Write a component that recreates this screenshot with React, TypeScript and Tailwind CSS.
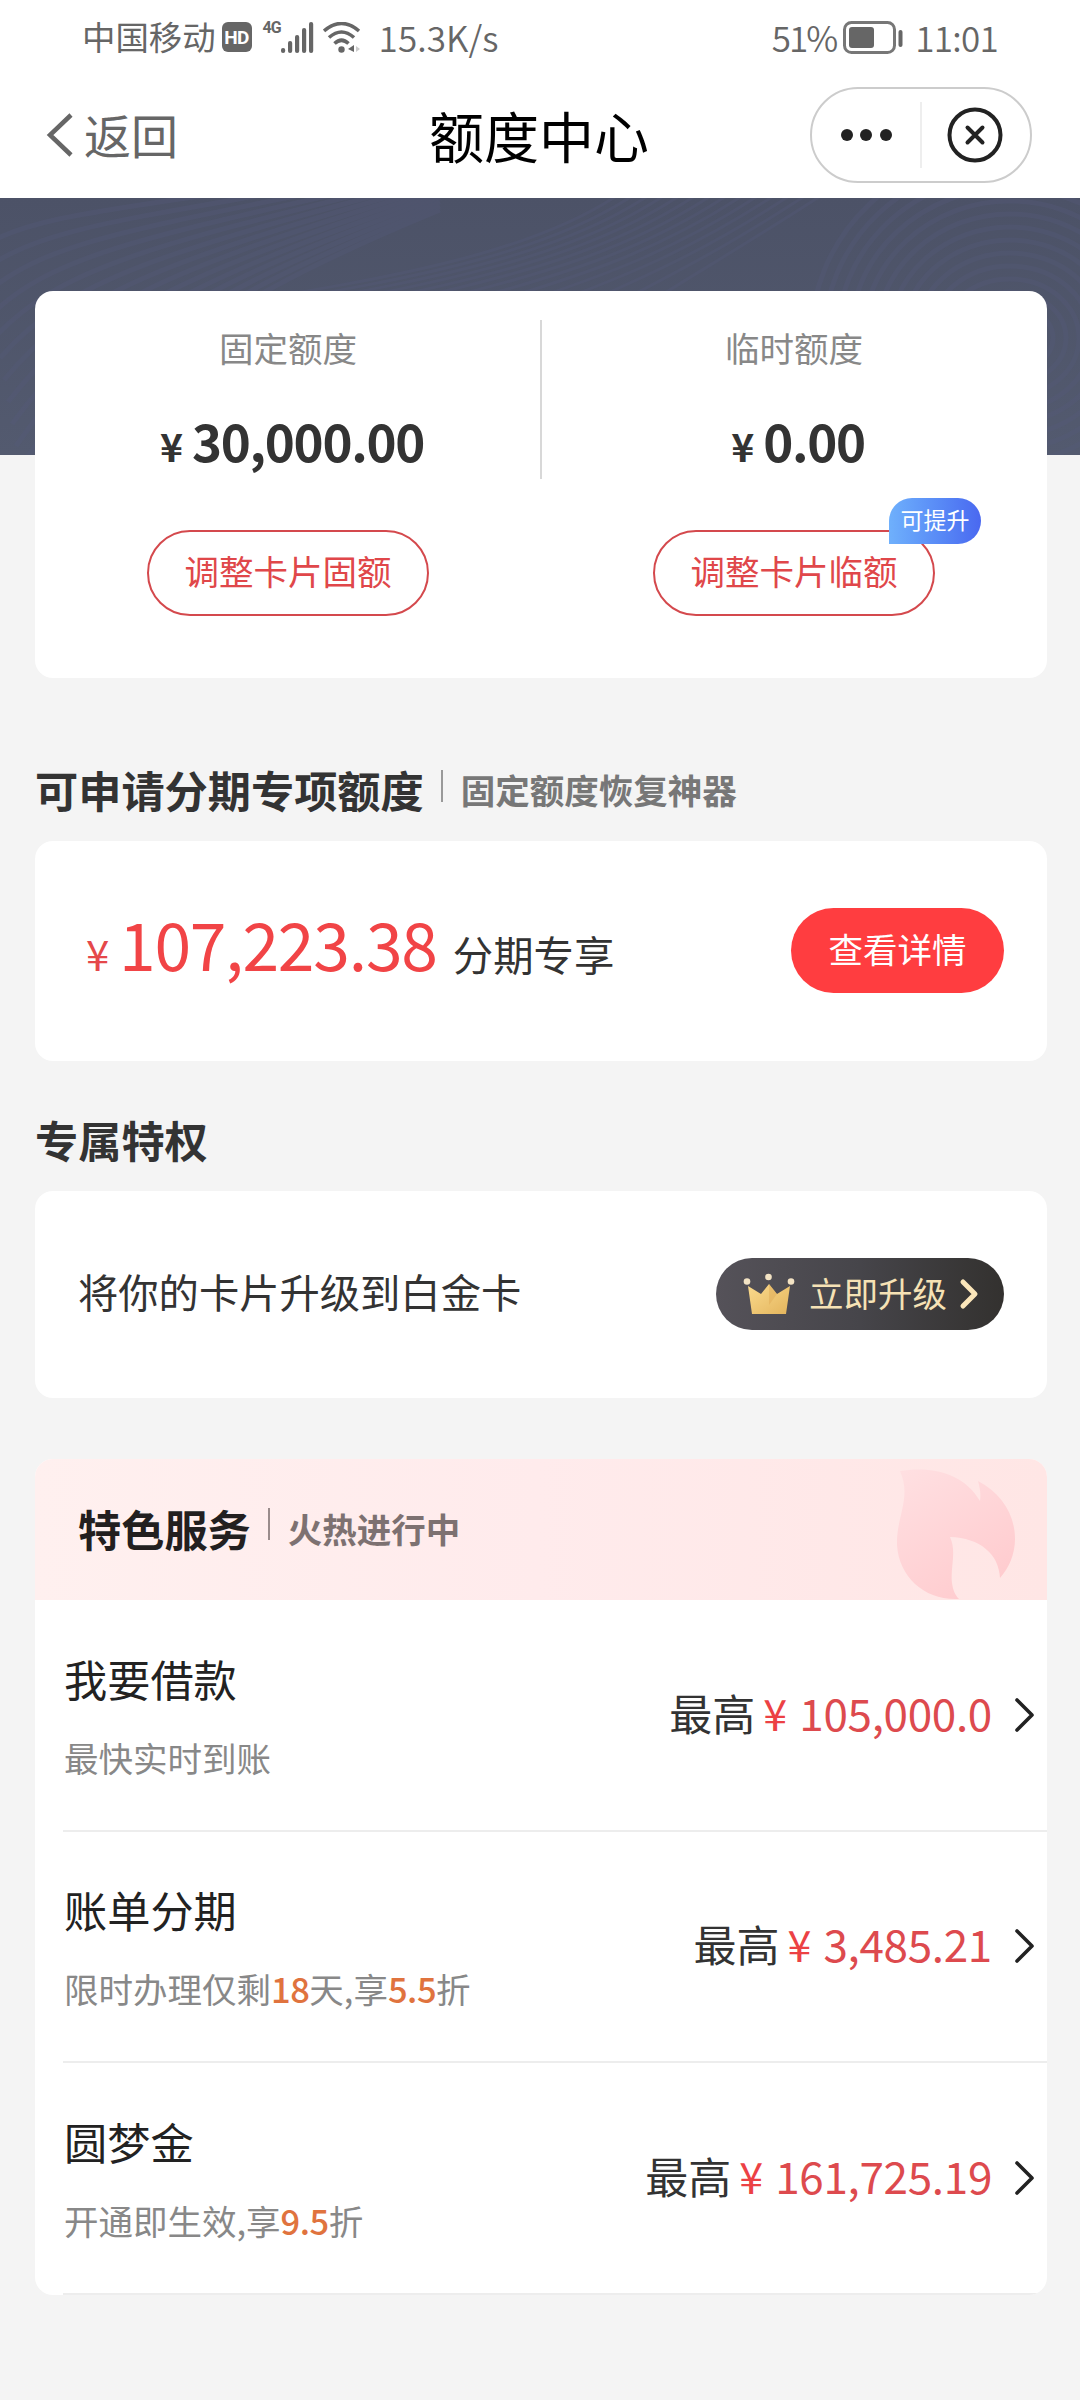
import type { ReactNode } from 'react';

type Service = {
  title: string;
  desc: ReactNode;
  amount: string;
};

const services: Service[] = [
  { title: '我要借款', desc: '最快实时到账', amount: '105,000.0' },
  {
    title: '账单分期',
    desc: (
      <>
        限时办理仅剩<Hot>18</Hot>天,享<Hot>5.5</Hot>折
      </>
    ),
    amount: '3,485.21',
  },
  {
    title: '圆梦金',
    desc: (
      <>
        开通即生效,享<Hot>9.5</Hot>折
      </>
    ),
    amount: '161,725.19',
  },
];

export default function App() {
  return (
    <div className="w-[1080px] h-[2400px] overflow-hidden bg-[#f4f4f4] text-[#333] font-['Noto_Sans_CJK_SC',sans-serif]">
      <StatusBar />
      <NavBar />
      <HeaderPattern />

      <main className="relative pl-[35px] pr-[33px] -mt-[164px]">
        <section className="h-[387px] rounded-[18px] bg-white flex">
          <Quota label="固定额度" amount="30,000.00" action="调整卡片固额" />
          <div className="w-[2px] -mx-px h-[159px] mt-[29px] bg-[#d8d8d8]" />
          <Quota label="临时额度" amount="0.00" action="调整卡片临额" badge="可提升" />
        </section>

        <SectionTitle title="可申请分期专项额度" sub="固定额度恢复神器" className="mt-[81px] h-[64px] mb-[18px]" />
        <section className="h-[220px] rounded-[18px] bg-white flex items-center justify-between pl-[51px] pr-[43px]">
          <p className="flex items-baseline leading-none whitespace-nowrap pb-[19px]">
            <span className="w-[33px] text-[42px] text-[#e5484a]">¥</span>
            <span className="text-[66px] tracking-[-1.2px] text-[#f14446]">107,223.38</span>
            <span className="ml-[16px] text-[40.4px]">分期专享</span>
          </p>
          <button className="w-[213px] h-[85px] mb-[2px] rounded-full bg-[#ff3d40] text-white text-[34.5px] leading-none pb-[4px]">
            查看详情
          </button>
        </section>

        <SectionTitle title="专属特权" className="mt-[48px] h-[64px] mb-[18px]" />
        <section className="h-[207px] rounded-[18px] bg-white flex items-center justify-between pl-[43px] pr-[43px]">
          <p className="text-[40.3px] leading-none pb-[6px]">将你的卡片升级到白金卡</p>
          <button className="w-[288px] h-[72px] mb-[2px] rounded-full bg-linear-to-r from-[#555259] via-[#46454a] to-[#33312f] flex items-center pl-[27px]">
            <Crown />
            <span className="ml-[13px] text-[34.5px] leading-none text-[#f6e2b5] pb-[3px]">立即升级</span>
            <svg className="ml-[12px]" width="21" height="32" viewBox="0 0 21 32" fill="none">
              <path d="M4 4 L16 16 L4 28" stroke="#fbe6ba" strokeWidth="5" strokeLinecap="round" strokeLinejoin="round" />
            </svg>
          </button>
        </section>

        <section className="mt-[61px] rounded-[18px] overflow-hidden bg-white">
          <div className="relative h-[141px] pl-[43px] bg-linear-to-r from-[#fff0ef] via-[#ffebec] to-[#ffe6e5] flex items-center">
            <TitleText title="特色服务" sub="火热进行中" dark />
            <Flame />
          </div>
          {services.map((s) => (
            <ServiceRow key={s.title} {...s} />
          ))}
        </section>
      </main>
    </div>
  );
}

function Hot({ children }: { children: ReactNode }) {
  return <span className="text-[#e0733e] font-medium tracking-[-0.5px]">{children}</span>;
}

function StatusBar() {
  return (
    <div className="h-[74px] bg-white flex items-center justify-between pl-[82px] pr-[82px] text-[#666]">
      <div className="flex items-center">
        <span className="text-[33.4px] leading-none pb-[2px]">中国移动</span>
        <span className="ml-[6px] w-[30px] h-[30px] rounded-[6px] bg-[#666] text-white text-[19px] font-bold leading-none tracking-[-0.5px] flex items-center justify-center font-['Roboto',sans-serif]">
          HD
        </span>
        <span className="ml-[11px] -mt-[18px] w-[18px] text-[16px] font-bold leading-none font-['Roboto',sans-serif] tracking-[-1px]">4G</span>
        <svg width="33" height="31" viewBox="0 0 33 31" fill="#666">
          <rect x="0" y="26" width="4.2" height="5" rx="2" />
          <rect x="7" y="19" width="4.2" height="12" rx="2" />
          <rect x="14" y="13" width="4.2" height="18" rx="2" />
          <rect x="21" y="6" width="4.2" height="25" rx="2" />
          <rect x="28" y="0" width="4.2" height="31" rx="2" />
        </svg>
        <svg className="ml-[9px]" width="38" height="31" viewBox="0 0 38 31" fill="none" stroke="#666" strokeWidth="3.6">
          <path d="M1 9 Q18.500 -6 36 9" />
          <path d="M6 15.500 Q18.500 4.500 31 15.500" />
          <path d="M11.500 21.500 Q18.500 15 25.500 21.500" />
          <circle cx="18.500" cy="27.500" r="3.200" fill="#666" stroke="none" />
          <path d="M25 27 L31 23 V30 Z" fill="#666" stroke="none" />
          <path d="M33 24 L37 27 L33 30 Z" fill="#ccc" stroke="none" />
        </svg>
        <span className="ml-[18px] text-[35px] font-[350] leading-none tracking-[0.1px] pb-[2px]">15.3K/s</span>
      </div>
      <div className="flex items-center">
        <span className="text-[35px] font-[350] leading-none tracking-[-2px] pb-[2px]">51%</span>
        <svg className="ml-[7px]" width="61" height="33" viewBox="0 0 61 33" fill="none">
          <rect x="1.500" y="1.500" width="50" height="30" rx="7" stroke="#777" strokeWidth="3" />
          <rect x="6" y="6" width="25" height="21" rx="3" fill="#666" />
          <rect x="55.500" y="9" width="4" height="17" rx="2" fill="#666" />
        </svg>
        <span className="ml-[11px] text-[35px] font-[350] leading-none tracking-[-0.7px] pb-[2px]">11:01</span>
      </div>
    </div>
  );
}

function NavBar() {
  return (
    <nav className="h-[124px] bg-white grid grid-cols-[1fr_auto_1fr] items-center pl-[46px] pr-[48px]">
      <div className="flex items-center text-[#666]">
        <svg className="mb-[3px]" width="28" height="44" viewBox="0 0 28 44" fill="none">
          <path d="M25 2 L4 22 L25 42" stroke="#666" strokeWidth="4.500" />
        </svg>
        <span className="ml-[10px] text-[47px] leading-none pb-[5px]">返回</span>
      </div>
      <h1 className="text-[55px] leading-none text-black pb-[4px]">额度中心</h1>
      <div className="justify-self-end w-[222px] h-[96px] rounded-full border-2 border-[#ccc] flex items-center mb-[2px]">
        <div className="w-[108px] flex justify-center gap-[7.5px]">
          <i className="size-[12px] rounded-full bg-[#222]" />
          <i className="size-[12px] rounded-full bg-[#222]" />
          <i className="size-[12px] rounded-full bg-[#222]" />
        </div>
        <div className="w-[2px] h-[66px] bg-[#eee]" />
        <svg className="ml-[25px]" width="56" height="56" viewBox="0 0 56 56" fill="none" stroke="#222" strokeWidth="4">
          <circle cx="28" cy="28" r="25.500" />
          <path d="M20.500 20.500 L35.500 35.500 M35.500 20.500 L20.500 35.500" strokeLinecap="round" />
        </svg>
      </div>
    </nav>
  );
}

// dark banner with faint contour lines behind the quota card
function HeaderPattern() {
  const lines = Array.from({ length: 14 }, (_, i) => i);
  return (
    <div className="h-[257px] bg-linear-to-b from-[#4c5267] to-[#535a6f]">
      <svg width="1080" height="257" viewBox="0 0 1080 257" fill="none" stroke="#565b7c" strokeWidth="5" opacity="0.3">
        {lines.map((i) => (
          <path key={`l${i}`} d={`M${-20 + i * 4} ${50 + i * 22} C ${40 + i * 6} ${10 + i * 14}, 160 ${10 + i * 9}, 440 ${-40 + i * 4}`} />
        ))}
        {lines.map((i) => (
          <path key={`m${i}`} d={`M${200 + i * 34} 110 C ${400 + i * 22} 80, ${560 + i * 14} 50, ${640 + i * 16} -20`} strokeWidth="3" />
        ))}
        {lines.map((i) => (
          <ellipse key={`r${i}`} cx="1010" cy="140" rx={30 + i * 13} ry={20 + i * 13} />
        ))}
      </svg>
    </div>
  );
}

function Quota({ label, amount, action, badge }: { label: string; amount: string; action: string; badge?: string }) {
  return (
    <div className="flex-1 flex flex-col items-center">
      <p className="mt-[38px] text-[34.5px] leading-[36px] text-[#888]">{label}</p>
      <p className="mt-[47px] pl-[8px] h-[56px] flex items-baseline leading-[56px] font-bold">
        <span className="w-[32px] text-[39px]">¥</span>
        <span className="text-[51px] tracking-[-1.3px]">{amount}</span>
      </p>
      <div className="relative mt-[62px]">
        <button className="w-[282px] h-[86px] rounded-full border-2 border-[#d4494d] text-[#e0474a] text-[34.5px] leading-none pb-[5px]">
          {action}
        </button>
        {badge && (
          <span className="absolute left-[236px] -top-[32px] w-[92px] h-[46px] rounded-[23px] rounded-bl-none bg-linear-to-r from-[#6fb0fc] to-[#4a68f0] text-white text-[23px] leading-[43px] text-center">
            {badge}
          </span>
        )}
      </div>
    </div>
  );
}

function TitleText({ title, sub, dark }: { title: string; sub?: string; dark?: boolean }) {
  return (
    <>
      <h2 className={`text-[43.2px] leading-none font-bold pb-[2px] ${dark ? 'text-[#231f1f]' : 'text-[#333]'}`}>{title}</h2>
      {sub && (
        <>
          <i className={`ml-[17px] mr-[18px] mb-[11px] w-[2px] h-[32px] ${dark ? 'bg-[#9a8c8c]' : 'bg-[#999]'}`} />
          <span className={`text-[34.500px] leading-none font-bold pb-[3px] ${dark ? 'text-[#7d7171]' : 'text-[#777]'}`}>{sub}</span>
        </>
      )}
    </>
  );
}

function SectionTitle({ title, sub, className }: { title: string; sub?: string; className: string }) {
  return (
    <div className={`flex items-center ${className}`}>
      <TitleText title={title} sub={sub} />
    </div>
  );
}

function ServiceRow({ title, desc, amount }: Service) {
  return (
    <div className="ml-[28px] h-[231.5px] border-b-2 border-[#ededed] flex items-center justify-between pr-[10px]">
      <div className="pl-px">
        <h3 className="text-[43.2px] leading-[50px] text-[#222]">{title}</h3>
        <p className="mt-[34px] text-[34.5px] leading-[40px] text-[#888]">{desc}</p>
      </div>
      <div className="flex items-center">
        <p className="flex items-baseline text-[43px] leading-none pb-[6px]">
          最高
          <span className="w-[36px] ml-[8px] text-[#ec4144]">¥</span>
          <span className="text-[44px] tracking-[-0.3px] text-[#dd4a4e]">{amount}</span>
        </p>
        <svg className="ml-[21px]" width="24" height="38" viewBox="0 0 24 38" fill="none">
          <path d="M4 4 L19 19 L4 34" stroke="#222" strokeWidth="3.600" strokeLinecap="round" strokeLinejoin="round" />
        </svg>
      </div>
    </div>
  );
}

function Crown() {
  return (
    <svg width="53" height="42" viewBox="0 0 53 42">
      <defs>
        <linearGradient id="gold" x1="0" y1="0" x2="1" y2="1">
          <stop offset="0" stopColor="#fbdb8e" />
          <stop offset="1" stopColor="#e3b45c" />
        </linearGradient>
      </defs>
      <path d="M5 13 L18 21 L26 11 L34 21 L47 13 L43 41 L9 41 Z" fill="url(#gold)" />
      <path d="M26 11 V32 L34 21 Z" fill="#dba650" opacity="0.4" />
      <circle cx="4" cy="8.500" r="3.300" fill="#f3e3c4" />
      <circle cx="25.500" cy="4" r="3.300" fill="#f3e3c4" />
      <circle cx="48" cy="8.500" r="3.300" fill="#f3e3c4" />
    </svg>
  );
}

function Flame() {
  return (
    <svg className="absolute right-[31px] bottom-0" width="119" height="131" viewBox="0 0 119 131">
      <defs>
        <linearGradient id="flame" x1="0" y1="0" x2="0.600" y2="1">
          <stop offset="0" stopColor="#ffe0e2" />
          <stop offset="1" stopColor="#ffcccf" />
        </linearGradient>
      </defs>
      <path
        d="M3 2 C34 -3 66 3 83 32 C84 25 83 19 81 12 C104 24 118 45 118 70 C118 85 112 99 103 109 C102 85 83 69 53 68 C60 83 53 99 55 114 C56 121 58 126 62 130 C29 132 2 109 0 76 C-1 48 15 29 3 2 Z"
        fill="url(#flame)"
      />
    </svg>
  );
}
